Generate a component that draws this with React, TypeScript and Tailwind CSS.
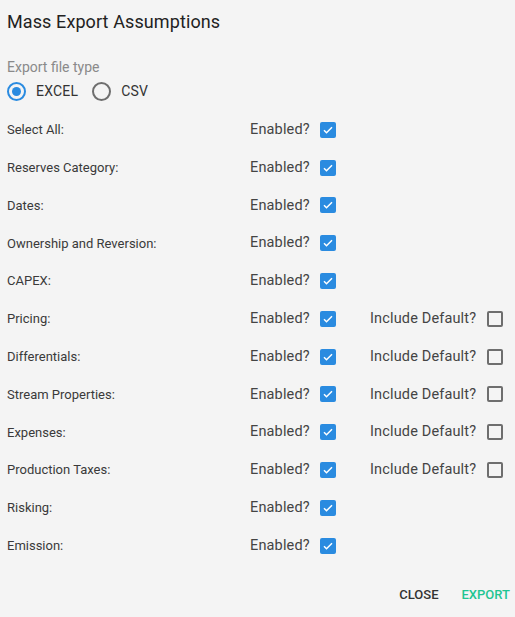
import React, { useState } from 'react';

type Row = { label: string; includeDefault?: boolean };

const rows: Row[] = [
  { label: 'Select All:' },
  { label: 'Reserves Category:' },
  { label: 'Dates:' },
  { label: 'Ownership and Reversion:' },
  { label: 'CAPEX:' },
  { label: 'Pricing:', includeDefault: true },
  { label: 'Differentials:', includeDefault: true },
  { label: 'Stream Properties:', includeDefault: true },
  { label: 'Expenses:', includeDefault: true },
  { label: 'Production Taxes:', includeDefault: true },
  { label: 'Risking:' },
  { label: 'Emission:' },
];

const Check: React.FC<{ checked: boolean; onClick: () => void }> = ({ checked, onClick }) => (
  <button
    onClick={onClick}
    className={`w-[16px] h-[16px] rounded-[2px] flex items-center justify-center ${
      checked ? 'bg-[#2a8be0]' : 'border-2 border-[#6e6e6e] bg-transparent'
    }`}
  >
    {checked && (
      <svg width="12" height="12" viewBox="0 0 24 24">
        <path d="M4 12.5l5 5L20 6.5" fill="none" stroke="white" strokeWidth="3" />
      </svg>
    )}
  </button>
);

const Radio: React.FC<{ checked: boolean }> = ({ checked }) => (
  <span
    className={`w-[19px] h-[19px] rounded-full border-2 flex items-center justify-center ${
      checked ? 'border-[#2a8be0]' : 'border-[#6e6e6e]'
    }`}
  >
    {checked && <span className="w-[9px] h-[9px] rounded-full bg-[#2a8be0]" />}
  </span>
);

export default function App() {
  const [fileType, setFileType] = useState('EXCEL');
  const [enabled, setEnabled] = useState<boolean[]>(rows.map(() => true));
  const [defaults, setDefaults] = useState<boolean[]>(rows.map(() => false));

  return (
    <div className="w-[515px] h-[617px] bg-[#f4f4f4] text-[#333] font-['Roboto',sans-serif] flex flex-col">
      <h1 className="px-[7px] pt-[10px] text-[18px] font-normal text-[#222] leading-[24px] tracking-[0.1px]">Mass Export Assumptions</h1>

      <div className="px-[7px] mt-[24px] text-[14px] text-[#8a8a8a] leading-[18px]">Export file type</div>
      <div className="px-[7px] mt-[5px] flex items-center gap-[10px] text-[14px] text-[#333] h-[20px] tracking-[0.2px]">
        {['EXCEL', 'CSV'].map(t => (
          <button key={t} onClick={() => setFileType(t)} className="flex items-center gap-[10px] mr-[4px]">
            <Radio checked={fileType === t} />
            <span>{t}</span>
          </button>
        ))}
      </div>

      <div className="mt-[10px] flex flex-col">
        {rows.map((r, i) => (
          <div key={r.label} className="h-[37.8px] px-[7px] flex items-center">
            <span className="w-[243px] text-[13px] text-[#3a3a3a]">{r.label}</span>
            <span className="text-[14.5px] tracking-[0.15px] text-[#444] w-[70px]">Enabled?</span>
            <Check checked={enabled[i]} onClick={() => setEnabled(p => p.map((v, j) => (j === i ? !v : v)))} />
            {r.includeDefault && (
              <>
                <span className="ml-[34px] text-[14.5px] tracking-[0.15px] text-[#444] w-[117px]">Include Default?</span>
                <Check checked={defaults[i]} onClick={() => setDefaults(p => p.map((v, j) => (j === i ? !v : v)))} />
              </>
            )}
          </div>
        ))}
      </div>

      <div className="mt-auto mb-[13px] flex justify-end items-center gap-[23px] pr-[5px] text-[13px] font-medium">
        <button className="text-[#333]">CLOSE</button>
        <button className="text-[#1fc592]">EXPORT</button>
      </div>
    </div>
  );
}
